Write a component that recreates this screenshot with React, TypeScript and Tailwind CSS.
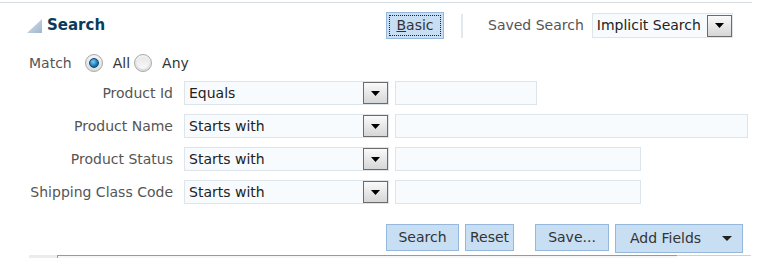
import React from "react";

const fields = [
  { label: "Product Id", op: "Equals", inputW: "w-[142px]" },
  { label: "Product Name", op: "Starts with", inputW: "w-[353px]" },
  { label: "Product Status", op: "Starts with", inputW: "w-[246px]" },
  { label: "Shipping Class Code", op: "Starts with", inputW: "w-[246px]" },
];

function DropButton() {
  return (
    <div className="w-[25px] h-[22px] border border-[#6b6b6b] bg-gradient-to-b from-[#fafafa] to-[#d6d6d6] flex items-center justify-center">
      <svg width="9" height="5" viewBox="0 0 9 5">
        <path d="M0 0h9L4.5 5z" fill="#000" />
      </svg>
    </div>
  );
}

function Radio({ checked }: { checked?: boolean }) {
  return (
    <span className="w-[18px] h-[18px] rounded-full border border-[#a9a9a9] bg-gradient-to-b from-[#f4f4f4] to-[#dcdcdc] flex items-center justify-center">
      {checked ? (
        <span className="w-[10px] h-[10px] rounded-full bg-[radial-gradient(circle_at_40%_35%,#7fd0f5,#1776b0_60%,#0b4f80)] border border-[#0d4a73]" />
      ) : (
        <span className="w-[12px] h-[12px] rounded-full bg-gradient-to-b from-[#e8e8e8] to-[#f8f8f8]" />
      )}
    </span>
  );
}

export default function App() {
  return (
    <div className="w-[757px] h-[258px] bg-white overflow-hidden relative text-[14px] text-[#474747] font-['DejaVu_Sans',sans-serif]">
      <div className="mt-[2px] h-px bg-[#d4dce2] mr-[5px]" />

      {/* header */}
      <div className="flex items-center h-[27px] mt-[9px]">
        <div className="w-[386px] pl-[27px] flex items-center gap-[5px]">
          <svg width="15" height="14" viewBox="0 0 15 14">
            <defs>
              <linearGradient id="tri" x1="0" y1="0" x2="1" y2="1">
                <stop offset="0" stopColor="#d7e3ee" />
                <stop offset="1" stopColor="#9fb7cc" />
              </linearGradient>
            </defs>
            <path d="M15 0V14H0z" fill="url(#tri)" />
          </svg>
          <span className="font-bold text-[15px] text-[#0b3b5b]">Search</span>
        </div>
        <button className="w-[58px] h-[27px] bg-[#c8def3] border border-[#95b8dc] p-[2px]">
          <span className="flex items-center justify-center h-full border border-dotted border-[#222] text-[#333]">
            <span className="underline">B</span>asic
          </span>
        </button>
        <div className="ml-[17px] w-[2px] h-[24px] bg-[#e3e8ec]" />
        <span className="ml-[25px] text-[#555]">Saved Search</span>
        <div className="ml-[8px] flex items-center h-[25px] w-[141px] border border-[#dde4ea] bg-[#f8fbfd]">
          <span className="flex-1 pl-[4px] text-[#222]">Implicit Search</span>
          <DropButton />
        </div>
      </div>

      {/* match */}
      <div className="flex items-center pl-[29px] mt-[13px] h-[22px]">
        <span className="text-[#555]">Match</span>
        <span className="ml-[13px]"><Radio checked /></span>
        <span className="ml-[10px] text-[#333]">All</span>
        <span className="ml-[4px]"><Radio /></span>
        <span className="ml-[10px] text-[#333]">Any</span>
      </div>

      {/* rows */}
      <div className="flex flex-col gap-[9px] mt-[7px]">
        {fields.map((f) => (
          <div key={f.label} className="flex items-center h-[24px]">
            <span className="w-[173px] text-right text-[#555] whitespace-nowrap">{f.label}</span>
            <div className="ml-[11px] w-[205px] h-[24px] flex items-center border border-[#dde4ea] bg-[#f8fbfd]">
              <span className="flex-1 pl-[4px] text-[#222]">{f.op}</span>
              <DropButton />
            </div>
            <div className={`ml-[6px] h-[24px] border border-[#dde4ea] bg-[#f8fbfd] ${f.inputW}`} />
          </div>
        ))}
      </div>

      {/* buttons */}
      <div className="flex items-start pl-[386px] mt-[20px] gap-[6px]">
        <button className="w-[73px] h-[27px] bg-[#c8def3] border border-[#95b8dc] text-[#333]">Search</button>
        <button className="w-[49px] h-[27px] bg-[#c8def3] border border-[#95b8dc] text-[#333]">Reset</button>
        <button className="ml-[15px] w-[74px] h-[27px] bg-[#c8def3] border border-[#95b8dc] text-[#333]">Save...</button>
        <button className="w-[128px] h-[29px] bg-[#c8def3] border border-[#95b8dc] text-[#333] flex items-center pl-[14px] pr-[10px]">
          <span className="flex-1 text-left">Add Fields</span>
          <svg width="10" height="5" viewBox="0 0 10 5">
            <path d="M0 0h10L5 5z" fill="#222" />
          </svg>
        </button>
      </div>

      {/* bottom table edge */}
      <div className="absolute left-[29px] top-[255px] right-[6px] h-[3px] flex">
        <div className="w-[28px] bg-[#ececec]" />
        <div className="w-[620px] border-t border-l border-[#9a9a9a] bg-[#f7f7f7]" />
        <div className="flex-1 border-t border-[#d0d0d0]" />
      </div>
    </div>
  );
}
